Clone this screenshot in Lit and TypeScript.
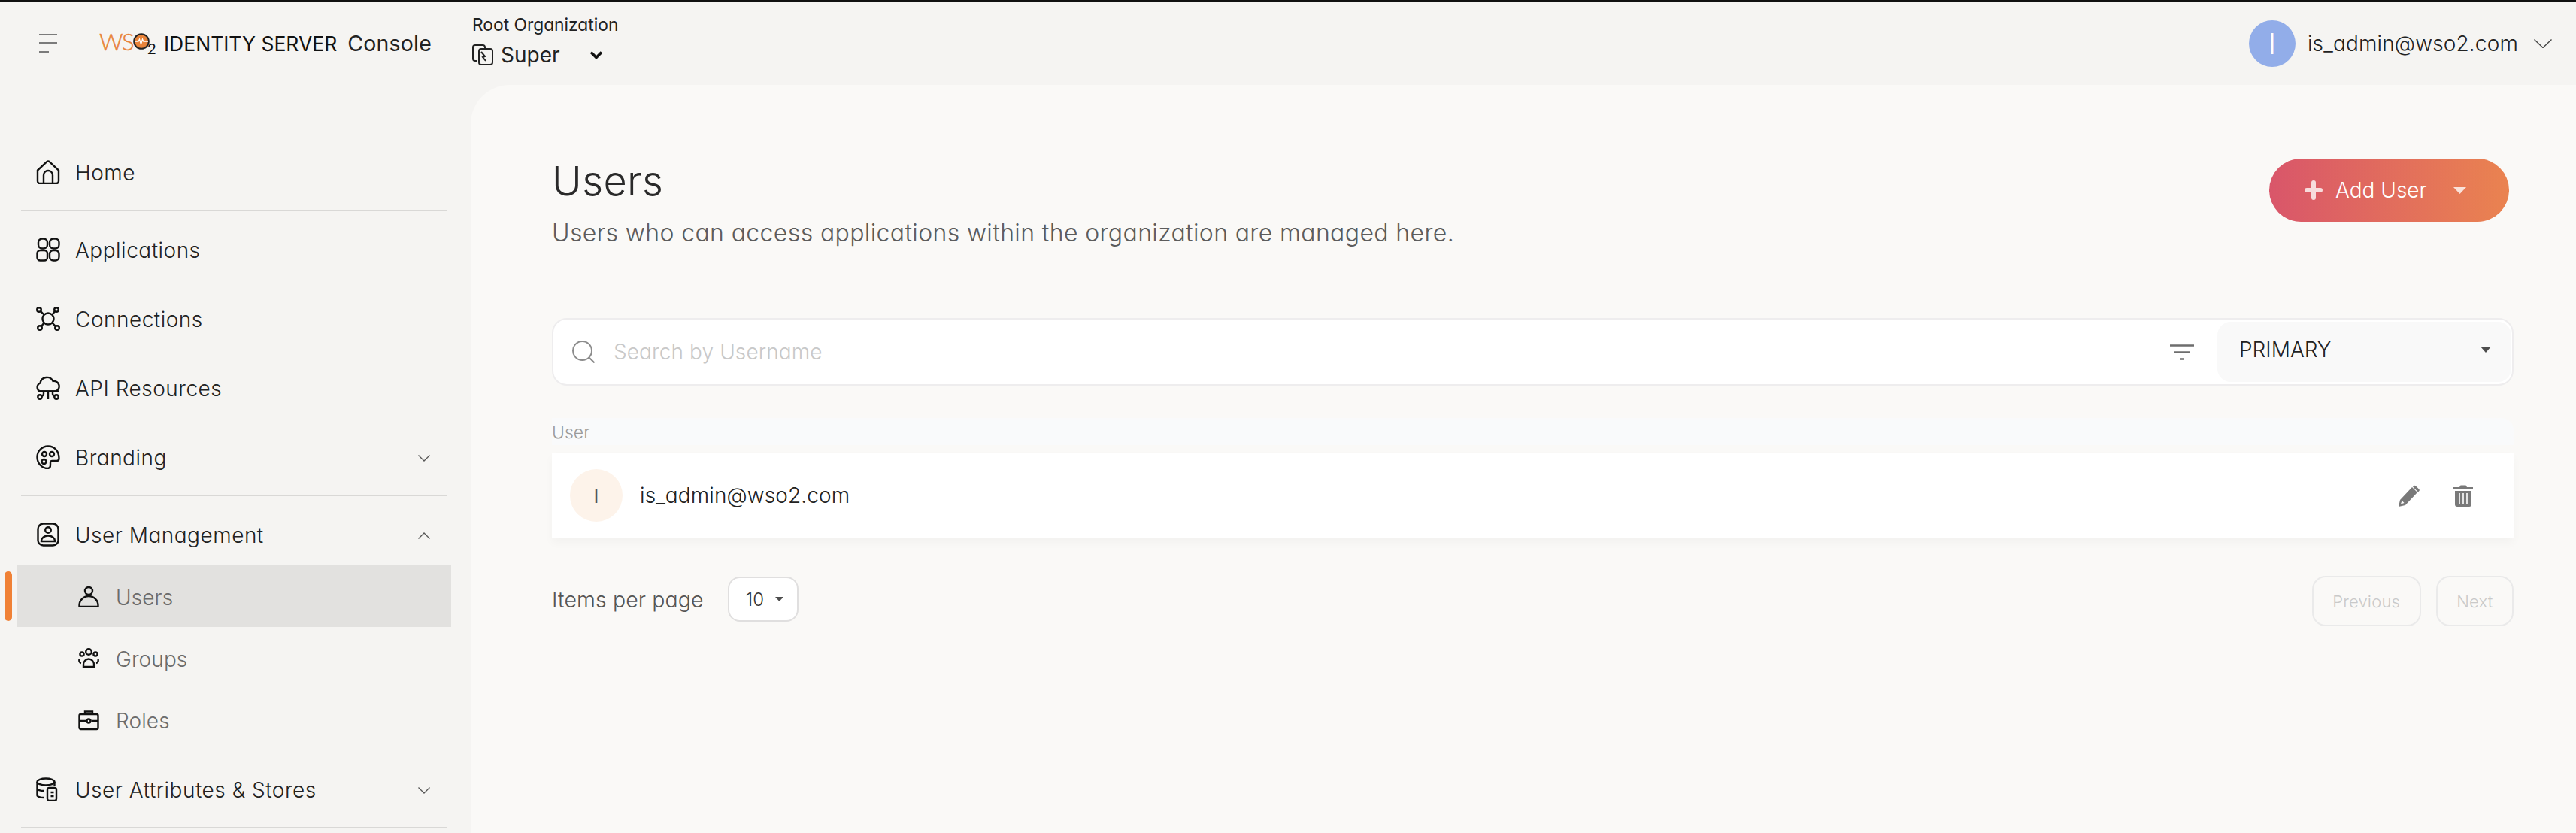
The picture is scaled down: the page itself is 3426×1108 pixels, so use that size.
import { LitElement, css, html, svg } from 'lit';
import { customElement } from 'lit/decorators.js';

const chevronDown = html`<svg class="chev" width="16" height="9" viewBox="0 0 16 9"><path d="M.5.5 8 8 15.5.5" fill="none" stroke="#555" stroke-width="1.3"/></svg>`;
const chevronUp = html`<svg class="chev" width="16" height="9" viewBox="0 0 16 9"><path d="M.5 8.5 8 1l7.5 7.5" fill="none" stroke="#555" stroke-width="1.3"/></svg>`;

// nav icons share one stroke, the box size is passed in
const navIcons = {
  home: svg`<path d="M2 13.5 14 2.400a3 3 0 0 1 4 0l12 11.100V28a3 3 0 0 1-3 3H5a3 3 0 0 1-3-3z"/><path d="M10 31V20a6 6 0 0 1 12 0v11"/>`,
  apps: svg`<rect x="3" y="1.500" width="12" height="13" rx="5"/><rect x="18" y="1.500" width="12.500" height="13" rx="5"/><rect x="1.500" y="17" width="13.500" height="13.500" rx="4"/><rect x="18" y="17" width="12.500" height="13.500" rx="5"/>`,
  conn: svg`<circle cx="16" cy="16" r="7.500"/><circle cx="4" cy="4" r="2.800"/><circle cx="27" cy="4" r="2.800"/><circle cx="5" cy="28" r="2.800"/><circle cx="28" cy="28" r="2.800"/><path d="m6 6 4.500 4.500M25 6l-3.500 4.500M7 26l3.500-4.500M26 26l-4.500-4.500"/>`,
  api: svg`<path d="M5 20.500a6 6 0 0 1 .5-11A9 9 0 0 1 22.500 7 7 7 0 0 1 26 20.500z"/><path d="M2 20.500h28M16 20.500V31M10 20.500v3.500M22 20.500v3.500"/><circle cx="5" cy="28" r="2.700"/><circle cx="27" cy="28" r="2.700"/><path d="M10 24q0 2-3 3M22 24q0 2 3 3"/>`,
  palette: svg`<path d="M16 1.500C7.500 1.500 1.500 8 1.500 16S7.500 31 15 31c3 0 4-2 4-4.500v-3c0-1.500 1-2.500 2.500-2.500h6c2 0 3-1.500 3-3.500C30.500 8 24.500 1.500 16 1.500z"/><circle cx="11" cy="12" r="3"/><circle cx="21" cy="12" r="3"/><circle cx="10.500" cy="22" r="3"/>`,
  mgmt: svg`<rect x="2.500" y="1.500" width="27" height="29" rx="7"/><circle cx="16" cy="10" r="3.800"/><path d="M7 25v-1a9 6.500 0 0 1 18 0v1z"/>`,
  user: svg`<circle cx="14" cy="6" r="5"/><path d="M1.500 27v-2a12.500 12 0 0 1 25 0v2z"/>`,
  group: svg`<circle cx="14" cy="5" r="3.800"/><circle cx="5" cy="8" r="2.600"/><circle cx="23" cy="8" r="2.600"/><path d="M7 25v-3a7 7.500 0 0 1 14 0v3zM4 20c-2.500-.5-3-3-2.500-5M24 20c2.500-.5 3-3 2.500-5"/>`,
  role: svg`<rect x="1.500" y="6" width="25" height="20" rx="2"/><path d="M9 6V2.500h10V6M1.500 15h9M17.500 15h9"/><circle cx="14" cy="15" r="2.500"/>`,
  store: svg`<ellipse cx="13" cy="6" rx="11.500" ry="4.500"/><path d="M1.500 6v18c0 1.500 4 3 9 3M24.500 6v5M1.500 15c0 1.500 4 3 9 3"/><rect x="15" y="14" width="12" height="17" rx="2.500"/><path d="M19.500 20h4M19.500 25h4"/>`,
};

type NavIcon = keyof typeof navIcons;

function navIcon(name: NavIcon, w = 32, h = 32) {
  return html`<svg class="nav-ico" width=${w} height=${h} viewBox="0 0 ${w} ${h}">${navIcons[name]}</svg>`;
}

@customElement('app-root')
export class AppRoot extends LitElement {
  static styles = css`
    :host {
      display: block;
      width: 3426px;
      height: 1108px;
      overflow: hidden;
      background: #f5f4f2;
      border-top: 2px solid #111;
      box-sizing: border-box;
      font-family: Inter, 'Noto Sans', sans-serif;
      font-feature-settings: 'cv11';
      font-weight: 350;
      color: #222;
    }

    /* top bar */
    .top {
      height: 111px;
      display: flex;
      align-items: center;
      padding: 0 32px 0 52px;
    }
    .burger {
      width: 24px;
      display: flex;
      flex-direction: column;
      gap: 9px;
      margin-right: 56px;
    }
    .burger i {
      display: block;
      height: 2.500px;
      background: #7b7b7b;
    }
    .burger i:last-child {
      width: 13px;
    }
    .brand {
      width: 496px;
      display: flex;
      align-items: center;
    }
    .logo {
      display: flex;
      align-items: flex-start;
      width: 86px;
      height: 32px;
      line-height: 26px;
    }
    .logo-ws {
      font-family: Lato, sans-serif;
      font-weight: 300;
      font-size: 31px;
      color: #e8833a;
      letter-spacing: -1.500px;
      font-feature-settings: normal;
      -webkit-text-stroke: 0.4px #e8833a;
    }
    .logo-o {
      margin-top: 2px;
    }
    .logo-2 {
      font-family: Lato, sans-serif;
      font-weight: 400;
      font-size: 20px;
      line-height: 18px;
      margin: 13px 0 0 -3px;
      color: #111;
    }
    .brand-name {
      font-size: 26.500px;
      font-weight: 400;
      color: #111;
      white-space: nowrap;
    }
    .brand-console {
      font-size: 28.500px;
      font-weight: 400;
      margin-left: 14px;
      letter-spacing: 0.2px;
      color: #222;
    }
    .org {
      align-self: flex-start;
      margin-top: 16px;
    }
    .org-label {
      font-size: 22.800px;
      line-height: 30px;
      font-weight: 400;
    }
    .org-row {
      display: flex;
      align-items: center;
      margin-top: 8px;
    }
    .org-name {
      font-size: 28px;
      font-weight: 400;
      margin-left: 10px;
      width: 118px;
    }
    .me {
      margin-left: auto;
      display: flex;
      align-items: center;
    }
    .me-avatar {
      width: 62px;
      height: 62px;
      border-radius: 50%;
      background: #92ade9;
      color: #fff;
      font-size: 38px;
      font-weight: 300;
      display: flex;
      align-items: center;
      justify-content: center;
      margin-right: 16px;
    }
    .me-name {
      font-size: 28px;
      margin-right: 21px;
      letter-spacing: 0.15px;
    }

    .body {
      display: flex;
      height: 995px;
    }

    /* side nav */
    .side {
      width: 626px;
      flex: none;
      padding-top: 71px;
      box-sizing: border-box;
      letter-spacing: 0.5px;
    }
    .item {
      height: 92px;
      display: flex;
      align-items: center;
      padding: 0 52px 0 48px;
      font-size: 28px;
      color: #222;
      box-sizing: border-box;
    }
    .item .nav-ico {
      margin: -2px 20px 0 0;
      flex: none;
    }
    .item .chev {
      margin-left: auto;
      margin-right: 2px;
    }
    .item.parent {
      height: 80px;
      margin-top: 12px;
    }
    .item.last {
      margin-top: 7px;
    }
    .nav-ico {
      fill: none;
      stroke: #111;
      stroke-width: 2.400;
    }
    .sub {
      height: 82px;
      box-sizing: border-box;
      padding: 3px 0 0 82px;
      display: flex;
      align-items: center;
      margin: 0 26px 0 22px;
      font-size: 28px;
      letter-spacing: 0.1px;
      color: #6c6c6c;
      position: relative;
    }
    .sub .nav-ico {
      margin: -2px 22px 0 0;
    }
    .sub.on {
      background: #e2e1df;
    }
    .sub.on::before {
      content: '';
      position: absolute;
      left: -16px;
      top: 8px;
      width: 10px;
      height: 66px;
      border-radius: 5px;
      background: #f08136;
    }
    .rule {
      height: 2px;
      background: #d9d8d6;
      margin: 3px 32px 6px 28px;
    }

    /* main panel */
    .panel {
      flex: 1;
      background: #faf9f7;
      border-top-left-radius: 52px;
      padding: 96px 83px 0 108px;
    }
    .head {
      display: flex;
      justify-content: space-between;
      align-items: flex-start;
      height: 121px;
      margin-bottom: 93px;
    }
    h1 {
      margin: 0;
      font-size: 54px;
      font-weight: 300;
      line-height: 64px;
      letter-spacing: 0.4px;
      color: #2a2a2a;
    }
    .lead {
      margin-top: 15px;
      font-size: 32px;
      line-height: 44px;
      letter-spacing: 0.37px;
      color: #5c5c5c;
    }
    .add {
      margin: 2px 6px 0 0;
      width: 319px;
      height: 84px;
      box-sizing: border-box;
      border-radius: 42px;
      background: linear-gradient(90deg, #d9566a, #ea8350);
      color: #fff;
      display: flex;
      align-items: center;
      padding-left: 47px;
      font-size: 28px;
      font-weight: 300;
    }
    .add-label {
      margin: 0 35px 0 17px;
    }
    .search {
      height: 90px;
      box-sizing: border-box;
      border: 2px solid #eeedee;
      border-radius: 20px;
      background: #fff;
      display: flex;
      align-items: center;
      padding: 0 1px 0 25px;
    }
    .hint {
      margin-left: 25px;
      font-size: 28px;
      letter-spacing: 0.1px;
      color: #c8c8c8;
    }
    .filter {
      margin-left: auto;
      margin-right: 31px;
    }
    .store {
      width: 391px;
      height: 80px;
      box-sizing: border-box;
      border-radius: 18px;
      background: #f9f9f9;
      display: flex;
      align-items: center;
      justify-content: space-between;
      padding: 0 27px 6px 29px;
      font-size: 28px;
    }
    .thead {
      margin-top: 43px;
      height: 36px;
      background: #f9fafb;
      border-top-right-radius: 16px;
      font-size: 23px;
      line-height: 38px;
      color: #9a9a9a;
    }
    .row {
      margin-top: 10px;
      height: 114px;
      background: #fff;
      box-shadow: 0 6px 12px rgba(0, 0, 0, 0.03);
      display: flex;
      align-items: center;
      padding: 0 54px 0 24px;
      font-size: 28px;
      letter-spacing: 0.1px;
    }
    .row-avatar {
      width: 70px;
      height: 70px;
      border-radius: 50%;
      background: #fdf3ea;
      display: flex;
      align-items: center;
      justify-content: center;
      font-size: 26px;
      font-weight: 400;
      color: #555;
      margin-right: 23px;
    }
    .row-actions {
      margin-left: auto;
      display: flex;
      align-items: center;
      gap: 45px;
    }
    .foot {
      margin-top: 50px;
      display: flex;
      justify-content: space-between;
      align-items: flex-start;
    }
    .per {
      display: flex;
      align-items: center;
      height: 60px;
      margin-top: 1px;
      font-size: 28.500px;
      letter-spacing: 0.1px;
      color: #555;
    }
    .per-select {
      margin-left: 32px;
      width: 94px;
      height: 60px;
      box-sizing: border-box;
      border: 2px solid #e0dfdf;
      border-radius: 16px;
      background: #fff;
      display: flex;
      align-items: center;
      padding-left: 22px;
      gap: 15px;
      font-size: 24px;
      color: #333;
    }
    .pager {
      display: flex;
      gap: 20px;
    }
    .page-btn {
      height: 67px;
      box-sizing: border-box;
      border: 2px solid #eaeaea;
      border-radius: 18px;
      padding: 0 25.500px;
      display: flex;
      align-items: center;
      font-size: 22px;
      letter-spacing: 0.2px;
      color: #c9c9c9;
    }
  `;

  render() {
    return html`
      <div class="top">
        <div class="burger"><i></i><i></i><i></i></div>
        <div class="brand">
          <div class="logo">
            <span class="logo-ws">WS</span>
            <svg class="logo-o" width="22" height="22" viewBox="0 0 22 22">
              <circle cx="11" cy="11" r="9.800" fill="#e8833a" stroke="#222" stroke-width="2"/>
              <path d="M2 11h5l1.500-3 2 7 2-7 1.300 3H20" fill="none" stroke="#fff" stroke-width="1.300"/>
            </svg>
            <span class="logo-2">2</span>
          </div>
          <span class="brand-name">IDENTITY SERVER</span>
          <span class="brand-console">Console</span>
        </div>
        <div class="org">
          <div class="org-label">Root Organization</div>
          <div class="org-row">
            <svg width="28" height="28" viewBox="0 0 28 28" fill="none" stroke="#222" stroke-width="2">
              <path d="M6 22H4a3 3 0 0 1-3-3V4a3 3 0 0 1 3-3h10a3 3 0 0 1 3 3v2"/>
              <rect x="9" y="6" width="18" height="21" rx="3"/>
              <path d="m12 10 5 6-3 1 4 5"/>
            </svg>
            <span class="org-name">Super</span>
            <svg width="18" height="12" viewBox="0 0 18 12"><path d="M2 2.500 9 9.500l7-7" fill="none" stroke="#111" stroke-width="3.600"/></svg>
          </div>
        </div>
        <div class="me">
          <span class="me-avatar">I</span>
          <span class="me-name">is_admin@wso2.com</span>
          <svg width="24" height="12" viewBox="0 0 24 12"><path d="M.5.5 12 11.500 23.500.5" fill="none" stroke="#444" stroke-width="1.400"/></svg>
        </div>
      </div>
      <div class="body">
        <nav class="side">
          <div class="item">${navIcon('home')}Home</div>
          <div class="rule"></div>
          <div class="item">${navIcon('apps')}Applications</div>
          <div class="item">${navIcon('conn')}Connections</div>
          <div class="item">${navIcon('api')}API Resources</div>
          <div class="item">${navIcon('palette')}Branding${chevronDown}</div>
          <div class="rule"></div>
          <div class="item parent">${navIcon('mgmt')}User Management${chevronUp}</div>
          <div class="sub on">${navIcon('user', 28, 28)}Users</div>
          <div class="sub">${navIcon('group', 28, 28)}Groups</div>
          <div class="sub">${navIcon('role', 28, 28)}Roles</div>
          <div class="item last">${navIcon('store')}User Attributes &amp; Stores${chevronDown}</div>
          <div class="rule"></div>
        </nav>
        <main class="panel">
          <div class="head">
            <div>
              <h1>Users</h1>
              <div class="lead">Users who can access applications within the organization are managed here.</div>
            </div>
            <div class="add">
              <svg width="24" height="26" viewBox="0 0 24 26"><path d="M12 3v20M3 13h18" stroke="#f7dcdc" stroke-width="6" stroke-linecap="round"/></svg>
              <span class="add-label">Add User</span>
              <svg width="17" height="9" viewBox="0 0 17 9"><path d="M0 0h17L8.500 9z" fill="#f9e2da"/></svg>
            </div>
          </div>
          <div class="search">
            <svg width="30" height="30" viewBox="0 0 30 30" fill="none" stroke="#8c8c8c" stroke-width="2"><circle cx="13.500" cy="13.500" r="12.500"/><path d="m22 22 7.500 7.500"/></svg>
            <span class="hint">Search by Username</span>
            <svg class="filter" width="32" height="21" viewBox="0 0 32 21"><path d="M0 1.500h32M5 10.500h22M13 19.500h6" stroke="#6e6e6e" stroke-width="2.600"/></svg>
            <div class="store">
              <span>PRIMARY</span>
              <svg width="14" height="8" viewBox="0 0 14 8"><path d="M0 0h14L7 8z" fill="#4d4d4d"/></svg>
            </div>
          </div>
          <div class="thead">User</div>
          <div class="row">
            <span class="row-avatar">I</span>
            <span>is_admin@wso2.com</span>
            <div class="row-actions">
              <svg width="28" height="29" viewBox="0 0 28 29"><path d="M0 29 2 20 18 3 25 10 9 27z M20 1.500a2 2 0 0 1 3 0l4 4a2 2 0 0 1 0 3l-1 1-7-7z" fill="#797979"/><path d="M3 25.500 4.500 21l3 3z" fill="#fff"/></svg>
              <svg width="26" height="29" viewBox="0 0 26 29">
                <path d="M0 3h8l1.500-2.500h7L18 3h8v3H0z" fill="#797979"/>
                <path d="M2 8h22v18a3 3 0 0 1-3 3H5a3 3 0 0 1-3-3z" fill="#797979"/>
                <path d="M8 11v15M13 11v15M18 11v15" stroke="#fff" stroke-width="1.600"/>
              </svg>
            </div>
          </div>
          <div class="foot">
            <div class="per">
              Items per page
              <div class="per-select">
                <span>10</span>
                <svg width="11" height="6" viewBox="0 0 11 6"><path d="M0 0h11L5.500 6z" fill="#4d4d4d"/></svg>
              </div>
            </div>
            <div class="pager">
              <div class="page-btn">Previous</div>
              <div class="page-btn">Next</div>
            </div>
          </div>
        </main>
      </div>
    `;
  }
}
